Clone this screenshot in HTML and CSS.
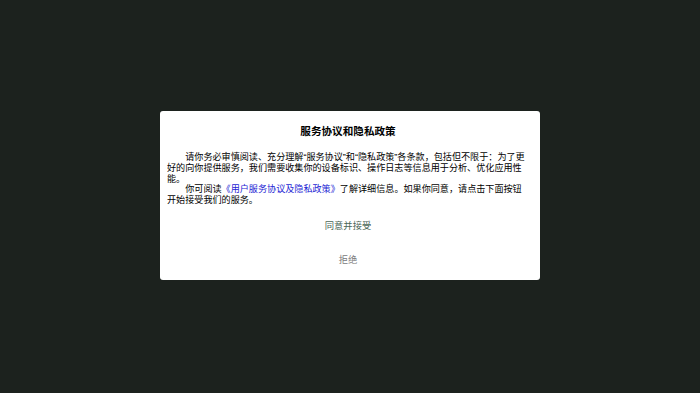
FILE: index.html
```html
<!DOCTYPE html>
<html lang="zh-CN">
<head>
<meta charset="utf-8">
<title>服务协议和隐私政策</title>
<link rel="stylesheet" href="styles.css">
</head>
<body>
<div class="screen">
  <div class="dialog">
    <div class="dialog-title">服务协议和隐私政策</div>
    <div class="dialog-body">
      <p class="para">请你务必审慎阅读、充分理解“服务协议”和“隐私政策”各条款，包括但不限于：为了更好的向你提供服务，我们需要收集你的设备标识、操作日志等信息用于分析、优化应用性能。</p>
      <p class="para">你可阅读<a class="link">《用户服务协议及隐私政策》</a>了解详细信息。如果你同意，请点击下面按钮开始接受我们的服务。</p>
    </div>
    <div class="actions">
      <button class="btn btn-accept">同意并接受</button>
      <button class="btn btn-reject">拒绝</button>
    </div>
  </div>
</div>
</body>
</html>
```
FILE: styles.css
```css
* { box-sizing: border-box; }
html, body {
  margin: 0;
  padding: 0;
  height: 100%;
}
body {
  background: #1c221e;
  font-family: "Liberation Sans", "Noto Sans CJK SC", sans-serif;
}
.screen {
  height: 100vh;
  display: flex;
  align-items: center;
  justify-content: center;
  padding-bottom: 2px;
}
.dialog {
  width: 380px;
  background: #ffffff;
  border-radius: 3px;
  padding: 12px 11px 6px 7px;
  display: flex;
  flex-direction: column;
}
.dialog-title {
  font-size: 10.6px;
  font-weight: bold;
  line-height: 16px;
  text-align: center;
  color: #000000;
}
.dialog-body {
  margin-top: 13px;
  width: 362px;
  font-size: 9.1px;
  line-height: 10.8px;
  color: #000000;
}
.para {
  margin: 0;
  text-indent: 2em;
}
.link {
  color: #2424d4;
  text-decoration: none;
}
.actions {
  margin-top: 4px;
  display: flex;
  flex-direction: column;
  gap: 4px;
}
.btn {
  height: 30px;
  border: none;
  background: transparent;
  font-family: inherit;
  font-size: 9.3px;
  padding: 0;
  text-align: center;
}
.btn-accept { color: #4a6656; }
.btn-reject { color: #7a7a7a; }
```
